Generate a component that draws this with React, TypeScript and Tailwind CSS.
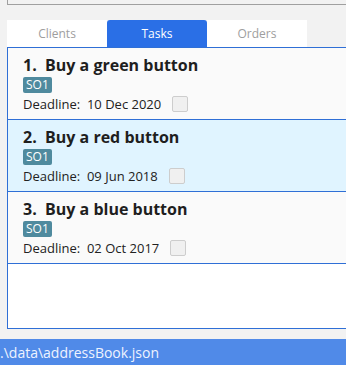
const tasks = [
  { id: 1, name: "Buy a green button", tag: "SO1", deadline: "10 Dec 2020", selected: false },
  { id: 2, name: "Buy a red button", tag: "SO1", deadline: "09 Jun 2018", selected: true },
  { id: 3, name: "Buy a blue button", tag: "SO1", deadline: "02 Oct 2017", selected: false },
];

const TaskCard = ({ task }: { task: (typeof tasks)[number] }) => {
  return (
    <div
      className={`h-[72px] border-b border-[#2f6fd6] pl-[15px] pt-[6px] ${
        task.selected ? "bg-[#e0f4ff]" : "bg-[#fafafa]"
      }`}
    >
      <div className="whitespace-pre text-[16px] leading-[22px] font-bold text-[#1e1e1e]">
        {task.id}.  {task.name}
      </div>
      <div className="mt-[1px] flex">
        <span className="h-[16px] rounded-[2px] bg-[#4f8a9e] px-[3px] text-[12px] leading-[16px] text-white">
          {task.tag}
        </span>
      </div>
      <div className="flex h-[22px] items-center">
        <span className="whitespace-pre text-[13px] leading-[18px] text-[#222]">
          Deadline:  {task.deadline}
        </span>
        <span className="ml-[11px] h-[16px] w-[16px] rounded-[2px] border border-[#cdcdcd] bg-[#f0f0f0]" />
      </div>
    </div>
  );
};

export default function App() {
  return (
    <div
      className="flex h-[365px] w-[346px] flex-col overflow-hidden bg-[#f2f2f2]"
      style={{ fontFamily: '"Open Sans", "Noto Sans", sans-serif' }}
    >
      <div className="ml-[7px] h-[5px] border-b border-l border-[#a0a0a0]" />

      <div className="mt-[15px] ml-[7px] flex h-[27px] text-[12px]">
        <div className="flex w-[100px] items-center justify-center bg-white text-[#9e9e9e]">Clients</div>
        <div className="flex w-[100px] items-center justify-center rounded-t-[3px] bg-[#2a6fe6] text-white">
          Tasks
        </div>
        <div className="flex w-[100px] items-center justify-center bg-white text-[#9e9e9e]">Orders</div>
      </div>

      <div className="ml-[7px] h-[282px] border-t border-b border-l border-[#2f6fd6] bg-white">
        {tasks.map((t) => (
          <TaskCard key={t.id} task={t} />
        ))}
      </div>

      <div className="mt-[10px] flex h-[26px] items-center bg-[#508ae8] text-[14px] text-[#eef3ff]">
        .\data\addressBook.json
      </div>
    </div>
  );
}
